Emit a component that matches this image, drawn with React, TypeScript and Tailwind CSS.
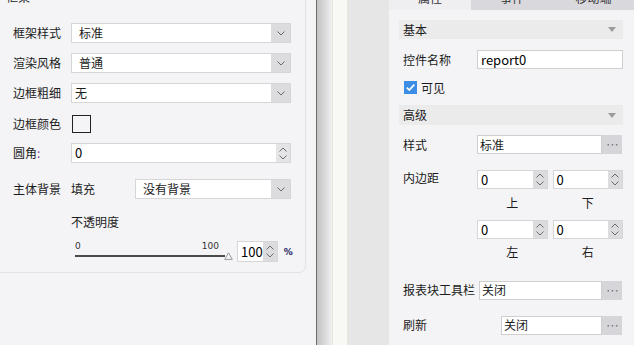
import React from "react"

function ChevronDown() {
  return (
    <svg width="8" height="5" viewBox="0 0 8 5" fill="none">
      <path d="M0.5 0.5 L4 4 L7.5 0.5" stroke="#6b6b6b" strokeWidth="1" />
    </svg>
  )
}

function ChevronUp() {
  return (
    <svg width="8" height="5" viewBox="0 0 8 5" fill="none">
      <path d="M0.5 4.5 L4 1 L7.5 4.5" stroke="#6b6b6b" strokeWidth="1" />
    </svg>
  )
}

function Dots() {
  return (
    <svg width="11" height="3" viewBox="0 0 11 3">
      <rect x="0.5" y="1" width="1.5" height="1.5" fill="#7a7a7a" />
      <rect x="4.7" y="1" width="1.5" height="1.5" fill="#7a7a7a" />
      <rect x="8.9" y="1" width="1.5" height="1.5" fill="#7a7a7a" />
    </svg>
  )
}

function Select({ value, className = "", textPad = "pl-[7px]" }: { value: string; className?: string; textPad?: string }) {
  return (
    <div className={`flex h-[20px] border border-[#d6d6d8] bg-white ${className}`}>
      <div className={`flex-1 flex items-center text-[12px] ${textPad}`}>{value}</div>
      <div className="w-[19px] bg-[#dcdcde] flex items-center justify-center">
        <ChevronDown />
      </div>
    </div>
  )
}

function Spinner({ value, className = "", btn = "bg-[#dcdcde]", h = "h-[19px]" }: { value: string; className?: string; btn?: string; h?: string }) {
  return (
    <div className={`flex ${h} border border-[#d6d6d8] bg-white ${className}`}>
      <div className="flex-1 flex items-center pl-[3px] text-[13px] text-black">{value}</div>
      <div className={`w-[14px] ${btn} flex flex-col items-center justify-center gap-[3px]`}>
        <ChevronUp />
        <ChevronDown />
      </div>
    </div>
  )
}

function InputBtn({ value, className = "" }: { value: string; className?: string }) {
  return (
    <div className={`flex h-[19px] ${className}`}>
      <div className="flex-1 flex items-center border border-[#cfcfd1] bg-white pl-[2px] text-[12px]">{value}</div>
      <div className="w-[20px] bg-[#d6d6da] flex items-center justify-center">
        <Dots />
      </div>
    </div>
  )
}

function SectionHeader({ title, className = "" }: { title: string; className?: string }) {
  return (
    <div className={`flex items-center justify-between bg-[#ebebec] pl-[4px] pr-[7px] text-[12px] ${className}`}>
      <span>{title}</span>
      <svg width="8" height="5" viewBox="0 0 8 5">
        <path d="M0 0 H8 L4 5 Z" fill="#9c9c9c" />
      </svg>
    </div>
  )
}

export default function App() {
  return (
    <div className="w-[634px] h-[345px] overflow-hidden flex text-[#1c1c1c] font-['Microsoft_YaHei','Noto_Sans_CJK_SC',sans-serif]">
      {/* left property panel */}
      <div className="w-[316px] h-full bg-[#f4f4f6]">
        <div className="-mt-[13px] -ml-[10px] w-[316px] border border-[#e2e2e5] rounded-[7px] pl-[22px] pr-[14px] pb-[10px]">
          <div className="h-[18px] leading-[18px] -ml-[7px] text-[12px]">框架</div>

          <div className="flex items-center mt-[17px] h-[20px]">
            <span className="w-[58px] text-[12px]">框架样式</span>
            <Select value="标准" className="flex-1" />
          </div>
          <div className="flex items-center mt-[10px] h-[20px]">
            <span className="w-[58px] text-[12px]">渲染风格</span>
            <Select value="普通" className="flex-1" />
          </div>
          <div className="flex items-center mt-[10px] h-[20px]">
            <span className="w-[58px] text-[12px]">边框粗细</span>
            <Select value="无" className="flex-1" textPad="pl-[3px]" />
          </div>
          <div className="flex items-center mt-[11px] h-[20px]">
            <span className="w-[59px] text-[12px]">边框颜色</span>
            <div className="w-[19px] h-[18px] border border-[#222] bg-[#f4f4f6]" />
          </div>
          <div className="flex items-center mt-[9px] h-[20px]">
            <span className="w-[58px] text-[12px]">
              圆角<span className="text-[#7a3c8c]">:</span>
            </span>
            <Spinner value="0" className="flex-1" btn="bg-[#e4e4e6]" h="h-[20px]" />
          </div>
          <div className="flex items-center mt-[16px] h-[20px]">
            <span className="w-[58px] text-[12px]">主体背景</span>
            <span className="w-[64px] text-[12px]">填充</span>
            <Select value="没有背景" className="flex-1" />
          </div>
          <div className="mt-[14px] ml-[58px] h-[18px] leading-[18px] text-[12px]">不透明度</div>
          <div className="flex items-start mt-[10px] ml-[62px]">
            <div className="flex flex-col w-[158px]">
              <div className="flex justify-between h-[10px] pr-[14px] text-[9px] leading-[10px] text-[#333] font-['DejaVu_Sans',sans-serif]">
                <span>0</span>
                <span>100</span>
              </div>
              <div className="flex items-center h-[9px]">
                <div className="w-[150px] h-[2px] bg-[#4a4a4a]" />
                <svg width="9" height="8" viewBox="0 0 9 8" className="-ml-[1px] mt-[1px]">
                  <path d="M4.5 0.8 L8.3 7.4 H0.7 Z" fill="#f4f4f6" stroke="#9a9a9a" strokeWidth="1" />
                </svg>
              </div>
            </div>
            <Spinner value="100" className="w-[42px] ml-[4px]" h="h-[21px]" />
            <span className="ml-[6px] mt-[5px] text-[9px] font-bold text-[#1a1a60] font-['DejaVu_Sans',sans-serif]">%</span>
          </div>
        </div>
      </div>

      {/* splitter */}
      <div className="w-px h-full bg-[#6a6a6a]" />
      <div className="w-[15px] h-full bg-gradient-to-r from-[#c2c2c2] to-[#f0f0f0]" />
      <div className="w-[16px] h-full bg-[#f8f8f4] border-x border-[#e6e8da]" />
      <div className="w-[41px] h-full bg-[#e6e6e6]" />

      {/* right property panel */}
      <div className="flex-1 h-full bg-[#f4f4f6] flex flex-col">
        <div className="-mt-[14px] h-[24px] flex text-[12px] text-[#333]">
          <div className="w-[82px] bg-[#efeff1] flex items-center justify-center">属性</div>
          <div className="w-[82px] bg-[#d9d9dd] flex items-center justify-center">事件</div>
          <div className="flex-1 bg-[#d9d9dd] flex items-center justify-center">移动端</div>
        </div>

        <div className="pl-[10px] pr-[11px] flex flex-col">
          <SectionHeader title="基本" className="mt-[10px] h-[19px]" />
          <div className="flex items-center mt-[11px] h-[19px]">
            <span className="w-[78px] pl-[4px] text-[12px]">控件名称</span>
            <div className="flex-1 h-full flex items-center border border-[#cfcfd1] bg-white pl-[3px] text-[13px] text-black">report0</div>
          </div>
          <div className="flex items-center mt-[12px] h-[13px] pl-[5px]">
            <svg width="13" height="13" viewBox="0 0 13 13">
              <rect width="13" height="13" fill="#3b8de6" />
              <path d="M2.8 6.6 L5.3 9.1 L10.3 3.6" fill="none" stroke="#fff" strokeWidth="1.6" />
            </svg>
            <span className="ml-[4px] text-[12px]">可见</span>
          </div>
          <SectionHeader title="高级" className="mt-[11px] h-[20px]" />
          <div className="flex items-center mt-[10px] h-[19px]">
            <span className="w-[78px] pl-[4px] text-[12px]">样式</span>
            <InputBtn value="标准" className="flex-1 mr-px" />
          </div>

          <div className="flex mt-[16px]">
            <span className="w-[78px] pl-[4px] text-[12px] leading-[16px]">内边距</span>
            <div className="flex-1 flex flex-col">
              <div className="flex gap-[5px]">
                <Spinner value="0" className="flex-1" />
                <Spinner value="0" className="flex-1" />
              </div>
              <div className="flex gap-[5px] h-[18px] mt-[5px] text-[12px]">
                <span className="flex-1 text-center">上</span>
                <span className="flex-1 text-center">下</span>
              </div>
              <div className="flex gap-[5px] mt-[8px]">
                <Spinner value="0" className="flex-1" />
                <Spinner value="0" className="flex-1" />
              </div>
              <div className="flex gap-[5px] h-[18px] mt-[4px] text-[12px]">
                <span className="flex-1 text-center">左</span>
                <span className="flex-1 text-center">右</span>
              </div>
            </div>
          </div>

          <div className="flex items-center mt-[20px] h-[18px]">
            <span className="w-[80px] pl-[4px] whitespace-nowrap text-[12px]">报表块工具栏</span>
            <InputBtn value="关闭" className="flex-1 mr-px h-[18px]" />
          </div>
          <div className="flex items-center mt-[17px] h-[18px]">
            <span className="w-[102px] pl-[4px] text-[12px]">刷新</span>
            <InputBtn value="关闭" className="flex-1 mr-px h-[18px]" />
          </div>
        </div>
      </div>
    </div>
  )
}
